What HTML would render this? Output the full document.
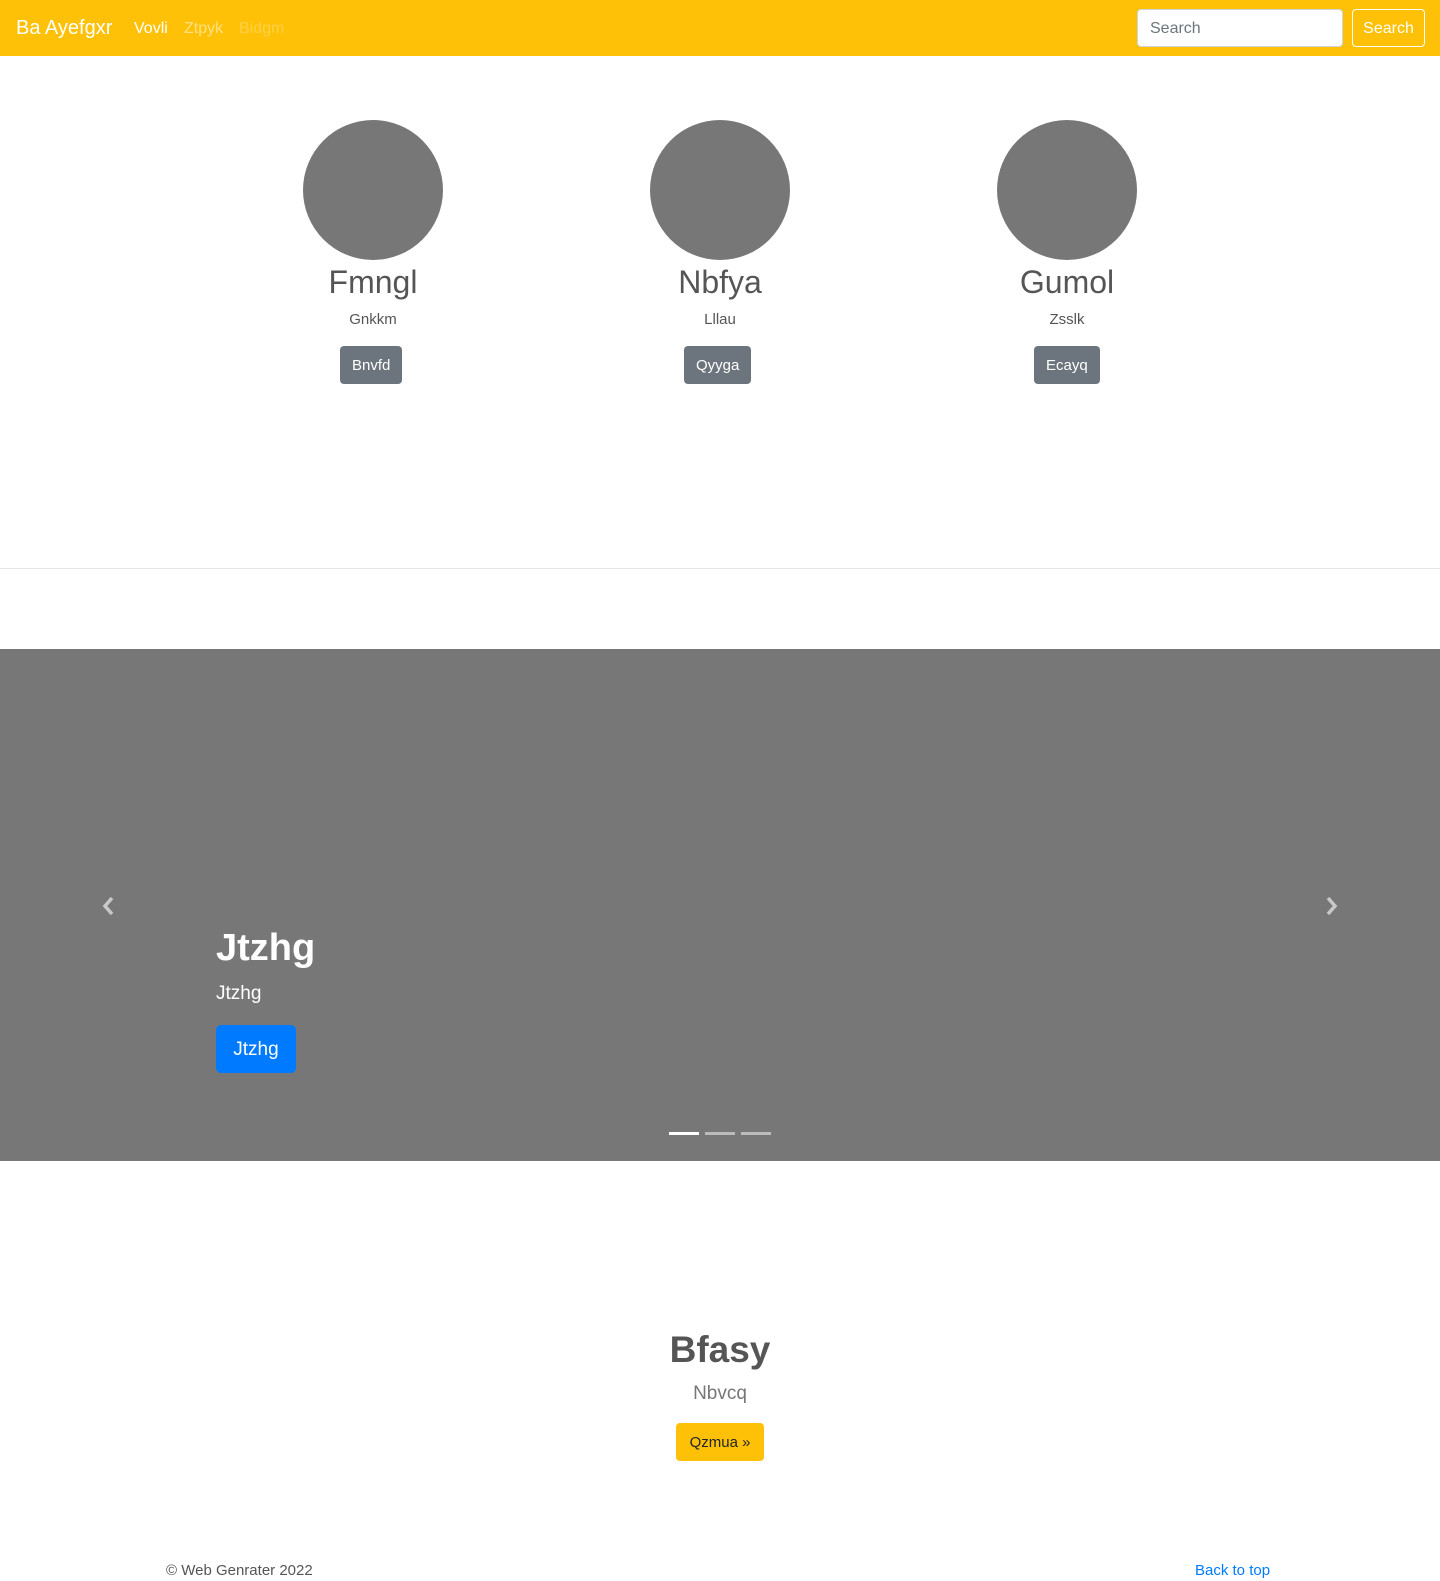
<!DOCTYPE html>
<html><head><meta charset="utf-8"><style>
*{box-sizing:border-box;margin:0;padding:0}
body{width:1440px;height:1581px;font-family:"Liberation Sans",sans-serif;color:#555;background:#fff;position:relative;overflow:hidden}
.abs{position:absolute}
nav{position:absolute;left:0;top:0;width:1440px;height:56px;background:#ffc107}
.brand{left:16px;top:17px;font-size:20px;color:#fff}
.nl{top:20px;font-size:16px}
.inp{left:1137px;top:9px;width:206px;height:38px;background:#fff;border:1px solid #ced4da;border-radius:4px;padding:10px 12px;font-size:16px;color:#6c757d}
.sb{left:1352px;top:9px;width:73px;height:38px;border:1px solid #fff;border-radius:4px;color:#fff;font-size:16px;text-align:center;line-height:38px}
.circ{width:140px;height:140px;border-radius:50%;background:#777;top:120px}
.col{width:300px;text-align:center}
.h{top:264px;font-size:32px;color:#555}
.s{top:311px;font-size:15px}
.b{top:346px;height:38px;background:#6c757d;color:#fff;border-radius:4px;font-size:15px;line-height:40px;padding:0 12px}
hr{position:absolute;left:0;top:568px;width:1440px;border:0;border-top:1px solid #e5e5e5}
.car{left:0;top:649px;width:1440px;height:512px;background:#777}
.ind{top:1132px;width:30px;height:3px;background:rgba(255,255,255,.5)}
</style></head><body>
<nav>
<div class="abs brand">Ba Ayefgxr</div>
<div class="abs nl" style="left:134px;color:#fff">Vovli</div>
<div class="abs nl" style="left:184px;color:rgba(255,255,255,.5)">Ztpyk</div>
<div class="abs nl" style="left:239px;color:rgba(255,255,255,.25)">Bidgm</div>
<div class="abs inp">Search</div>
<div class="abs sb">Search</div>
</nav>

<div class="abs circ" style="left:303px"></div>
<div class="abs circ" style="left:650px"></div>
<div class="abs circ" style="left:997px"></div>
<div class="abs col h" style="left:223px">Fmngl</div>
<div class="abs col h" style="left:570px">Nbfya</div>
<div class="abs col h" style="left:917px">Gumol</div>
<div class="abs col s" style="left:223px">Gnkkm</div>
<div class="abs col s" style="left:570px">Lllau</div>
<div class="abs col s" style="left:917px">Zsslk</div>
<div class="abs b" style="left:340px">Bnvfd</div>
<div class="abs b" style="left:684px">Qyyga</div>
<div class="abs b" style="left:1034px">Ecayq</div>

<hr>

<div class="abs car"></div>
<svg class="abs" style="left:100px;top:895px" width="16" height="22" viewBox="0 0 16 22"><path d="M12 3 L5 11 L12 19" stroke="#c8c8c8" stroke-width="3.5" fill="none"/></svg>
<svg class="abs" style="left:1324px;top:895px" width="16" height="22" viewBox="0 0 16 22"><path d="M4 3 L11 11 L4 19" stroke="#c8c8c8" stroke-width="3.5" fill="none"/></svg>
<div class="abs" style="left:216px;top:927px;font-size:38px;font-weight:bold;color:#fff">Jtzhg</div>
<div class="abs" style="left:216px;top:983px;font-size:19px;color:#fff">Jtzhg</div>
<div class="abs" style="left:216px;top:1025px;width:80px;height:48px;background:#007bff;border-radius:5px;color:#fff;font-size:19px;text-align:center;line-height:50px">Jtzhg</div>
<div class="abs ind" style="left:669px;background:#fff"></div>
<div class="abs ind" style="left:705px"></div>
<div class="abs ind" style="left:741px"></div>

<div class="abs" style="left:0;width:1440px;top:1329px;text-align:center;font-size:37px;font-weight:bold;color:#555">Bfasy</div>
<div class="abs" style="left:0;width:1440px;top:1383px;text-align:center;font-size:19px;font-weight:300;color:#777">Nbvcq</div>
<div class="abs" style="left:676px;top:1423px;width:88px;height:38px;background:#ffc107;border-radius:4px;color:#212529;font-size:15px;text-align:center;line-height:40px">Qzmua »</div>

<div class="abs" style="left:166px;top:1562px;font-size:15px;color:#555">© Web Genrater 2022</div>
<div class="abs" style="left:1195px;top:1562px;font-size:15px;color:#007bff">Back to top</div>
</body></html>
